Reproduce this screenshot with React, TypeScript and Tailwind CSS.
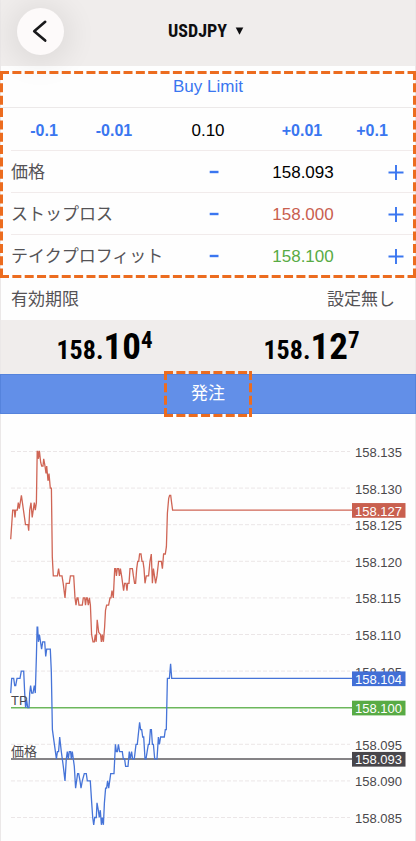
import { useState } from "react";

// [x, last three digits of the price]
const askTicks: [number, number][] = [
  [10.7, 123], [12.7, 127], [14.3, 127], [15, 126], [15.7, 127], [17.3, 127], [18.3, 128], [19.3, 127.2],
  [21.4, 129], [25.5, 125], [28, 125], [28.7, 124.2], [29.7, 127], [31, 128], [32.2, 126], [34.3, 128],
  [35.3, 127], [36.4, 128], [37.2, 135], [37.8, 135], [38.4, 134], [39.4, 135.1], [40.7, 133.5], [41.7, 133],
  [43, 133], [43.7, 134], [45, 133], [46, 132], [46.7, 133], [48, 131], [49, 132], [50.3, 130],
  [51.4, 130], [52.3, 120.6], [53.3, 118], [57.4, 118], [58.6, 119], [59.6, 118], [62, 118], [63.2, 117],
  [65, 115], [66.2, 117], [69.3, 117], [70.4, 118], [73.7, 118], [75, 115], [76, 114], [77, 115],
  [78, 115], [79, 114], [82.3, 114], [83.3, 115], [84.7, 115], [85.5, 114], [86.4, 115], [87.3, 115],
  [88.3, 114], [89.4, 115], [90.4, 114], [91.6, 110], [93, 109], [94.3, 109], [95.3, 110], [96.2, 109],
  [97.2, 112], [98.7, 110.3], [100.5, 110], [101.4, 109], [102.3, 110], [103.4, 109], [104.6, 111], [105.5, 113.3],
  [106.6, 114], [108.6, 114], [110, 115], [111, 115], [112, 116], [113.3, 115], [114.7, 119], [115.6, 119],
  [116.4, 118], [117.3, 119], [118.6, 119], [119.4, 118], [120.4, 119], [121.6, 118], [123.6, 116], [124.6, 117],
  [126, 117], [127, 116], [127.7, 117], [129, 117], [130, 119], [132.4, 119], [133.4, 118], [134.6, 117],
  [135.6, 117], [136.7, 119], [137.7, 120], [138.7, 120], [139.6, 121], [141, 121], [142, 120], [143, 120],
  [144, 119], [145, 117], [146.3, 118], [148.6, 118], [150, 120], [151.3, 121], [152.4, 117], [153.4, 119],
  [155.6, 117], [157, 118], [158.6, 120], [161.3, 120], [162.4, 119], [163.6, 121], [165.3, 121], [166.4, 122],
  [167.4, 126.6], [168.7, 128.6], [169.6, 129], [170.7, 129], [171.6, 128], [172.6, 127], [352, 127],
];

const bidTicks: [number, number][] = [
  [10.7, 102], [11.7, 104], [13.7, 104], [14.7, 103], [15.7, 103], [17, 104], [20, 104], [21.3, 105],
  [23.7, 105], [24.7, 102], [25.6, 100], [26.7, 101], [27.7, 100], [29, 100], [29.7, 102], [30.6, 103],
  [31.7, 102], [33, 102], [34.3, 103], [35.3, 102], [36.4, 107], [37.1, 111], [37.7, 111], [38.4, 109],
  [39.4, 110], [41.6, 108], [42.7, 109], [44.7, 109], [45.7, 107], [46.7, 108], [50.3, 108], [51.3, 105],
  [52.4, 97], [54.4, 95], [56.4, 93], [57.4, 94], [58.6, 94], [59.7, 96], [61.3, 94], [63.3, 92],
  [65, 90], [66.3, 93], [67.3, 94], [68.3, 93], [69.3, 94], [70.6, 94], [71.3, 93], [72.3, 94],
  [74.3, 92], [75.6, 89], [76.6, 90], [77.6, 91], [78.7, 91], [80, 90], [81, 89], [82.3, 90],
  [84.3, 91], [86.3, 91], [87.3, 90], [90.3, 90], [91.7, 87], [92.7, 85], [93.7, 84], [94.7, 85],
  [96.3, 85], [97, 87], [98.3, 86], [99.3, 85], [100.3, 86], [101.4, 84], [102.3, 85], [103.4, 84],
  [104.4, 87], [105.6, 89], [106.6, 89], [107.6, 90], [108.7, 89], [110.7, 91], [114, 91], [114.7, 93],
  [115.4, 95], [116.4, 94], [117.4, 94], [118.4, 95], [119.6, 94], [122.3, 94], [123.3, 93], [124.6, 93],
  [125.6, 92], [128, 92], [129.3, 94], [130.3, 93], [131.6, 94], [132.6, 93], [134.3, 93], [136, 95],
  [137.3, 95], [139.6, 98], [140.6, 97], [141.7, 97], [142.7, 96], [143.7, 96], [145, 93], [146, 93],
  [148.3, 95], [149.3, 95], [150.4, 97], [151.4, 97], [152.4, 95], [153.4, 95], [154.7, 93], [157, 93],
  [158.4, 96], [159.4, 95], [160.6, 96], [164.3, 96], [165.3, 97], [166.3, 97], [167.4, 104], [169.4, 104],
  [170.6, 106], [171.7, 104], [352, 104],
];

const gridTicks = [135, 130, 125, 120, 115, 110, 105, 95, 90, 85];

const markers = [
  { tick: 127, color: "#c9604f" },
  { tick: 104, color: "#426fd6" },
  { tick: 100, color: "#58ab45" },
  { tick: 93, color: "#48464b" },
];

const toY = (tick: number) => 37.5 + (135 - tick) * 7.32;
const toPoints = (ticks: [number, number][]) => ticks.map(([x, t]) => `${x},${toY(t).toFixed(1)}`).join(" ");
const toPrice = (tick: number) => `158.${String(tick).padStart(3, "0")}`;

function DashedFrame() {
  const dash = { stroke: "#ec6c1f", strokeWidth: 6, strokeDasharray: "9 3.35" };
  return (
    <svg className="h-full w-full" aria-hidden="true">
      <line x1="0" y1="0" x2="100%" y2="0" {...dash} />
      <line x1="0" y1="100%" x2="100%" y2="100%" {...dash} />
      <line x1="0" y1="0" x2="0" y2="100%" {...dash} />
      <line x1="100%" y1="0" x2="100%" y2="100%" {...dash} />
    </svg>
  );
}

function PriceRow({ id, label, initial, color }: { id: string; label: string; initial: string; color: string }) {
  const [value, setValue] = useState(initial);
  const step = (diff: number) => setValue((v) => (Number(v) + diff).toFixed(3));

  return (
    <div className="ml-[10px] flex h-[42px] items-center border-t border-[#f1ebeb] pt-[2px]">
      <label htmlFor={id} className="flex-1">{label}</label>
      <button type="button" aria-label={`${label} -`} onClick={() => step(-0.001)} className="flex h-full w-10 items-center justify-center">
        <svg width="10" height="16" viewBox="0 0 10 16">
          <path d="M.7 7h8.8" stroke="#3a76f0" strokeWidth="2.4" />
        </svg>
      </button>
      <input
        id={id}
        value={value}
        onChange={(e) => setValue(e.target.value)}
        className={`w-[138px] bg-transparent text-center outline-none ${color}`}
      />
      <button type="button" aria-label={`${label} +`} onClick={() => step(0.001)} className="flex h-full w-[43px] items-center justify-center pl-1">
        <svg width="16" height="16" viewBox="0 0 16 16">
          <path d="M.5 7.5h15M8 0v15" stroke="#3a76f0" strokeWidth="1.9" />
        </svg>
      </button>
    </div>
  );
}

function Quote({ whole, pips, point }: { whole: string; pips: string; point: string }) {
  return (
    <div className="whitespace-nowrap text-center text-[37px] leading-[54px]">
      <span className="text-[26px]">{whole}</span>
      <span>{pips}</span>
      <sup className="text-[23px]">{point}</sup>
    </div>
  );
}

function TickChart() {
  return (
    <svg viewBox="1 0 414 427" className="block w-full" fontFamily="'Liberation Sans', 'Noto Sans CJK JP', sans-serif" fontSize="13">
      {gridTicks.map((tick) => (
        <g key={tick}>
          <line x1="11" x2="350" y1={toY(tick)} y2={toY(tick)} stroke="#ebe6e7" strokeDasharray="4 2" />
          <text x="355" y={toY(tick) + 5.5} fill="#4a484b">{toPrice(tick)}</text>
        </g>
      ))}
      <line x1="11" x2="352" y1={toY(100)} y2={toY(100)} stroke="#6cb75c" strokeWidth="1.4" />
      <line x1="11" x2="352" y1={toY(93)} y2={toY(93)} stroke="#5c5a5e" strokeWidth="1.4" />
      <polyline points={toPoints(askTicks)} fill="none" stroke="#cf6555" strokeWidth="1.3" />
      <polyline points={toPoints(bidTicks)} fill="none" stroke="#4674d8" strokeWidth="1.3" />
      <text x="11" y="291" fill="#4a484b">TP</text>
      <text x="11" y="342" fill="#4a484b">価格</text>
      {markers.map(({ tick, color }) => (
        <g key={tick}>
          <rect x="352" y={toY(tick) - 7} width="53.5" height="14.7" fill={color} />
          <text x="355" y={toY(tick) + 5.5} fill="#fff">{toPrice(tick)}</text>
        </g>
      ))}
    </svg>
  );
}

export default function App() {
  const [volume, setVolume] = useState("0.10");
  const stepVolume = (diff: number) => setVolume((v) => Math.max(0, Number(v) + diff).toFixed(2));

  return (
    <div className="border-x border-[#ebe8e8] bg-[#fefefe] font-['Liberation_Sans','Noto_Sans_CJK_JP',sans-serif] text-[17px] leading-6 text-[#555356]">
      <header className="relative z-10 grid h-[66px] grid-cols-[1fr_auto_1fr] items-center bg-[#f0edec] pb-1 pl-4">
        <button
          type="button"
          aria-label="戻る"
          className="flex size-[47px] items-center justify-center rounded-full bg-[#fdfafa] shadow-[0_3px_28px_8px_rgba(0,0,0,0.07)]"
        >
          <svg width="24" height="24" viewBox="0 0 24 24" fill="none">
            <path d="M16.2 2.8 5.2 12.2l11 9.4" stroke="#19191b" strokeWidth="2.6" strokeLinecap="round" strokeLinejoin="round" />
          </svg>
        </button>
        <button
          type="button"
          className="-ml-5 flex items-center gap-2 font-['Roboto_Condensed','Liberation_Sans',sans-serif] text-lg font-bold text-[#0e0e10]"
        >
          USDJPY
          <svg width="9" height="8" viewBox="0 0 9 8">
            <path d="M.7.6h7.6L4.5 7.8z" fill="currentColor" />
          </svg>
        </button>
      </header>

      <form onSubmit={(e) => e.preventDefault()}>
        <div className="relative">
          <button type="button" className="block h-[41px] w-full text-[#3a76f0]">Buy Limit</button>

          <div className="flex h-[43px] items-center border-t border-[#ece9e9] px-2 pt-[3px] text-[#3a76f0]">
            <button type="button" onClick={() => stepVolume(-0.1)} className="w-[70px] text-base font-bold">-0.1</button>
            <button type="button" onClick={() => stepVolume(-0.01)} className="w-[70px] text-base font-bold">-0.01</button>
            <input
              aria-label="数量"
              value={volume}
              onChange={(e) => setVolume(e.target.value)}
              className="min-w-0 flex-1 bg-transparent text-center text-black outline-none"
            />
            <button type="button" onClick={() => stepVolume(0.01)} className="w-[70px] text-base font-bold">+0.01</button>
            <button type="button" onClick={() => stepVolume(0.1)} className="w-[70px] text-base font-bold">+0.1</button>
          </div>

          <PriceRow id="price" label="価格" initial="158.093" color="text-black" />
          <PriceRow id="stop-loss" label="ストップロス" initial="158.000" color="text-[#c9604f]" />
          <PriceRow id="take-profit" label="テイクプロフィット" initial="158.100" color="text-[#58ab45]" />

          <div className="pointer-events-none absolute -inset-x-px top-[5px] -bottom-[2px] z-20">
            <DashedFrame />
          </div>
        </div>

        <div className="flex h-11 items-center justify-between pt-[3px] pr-5 pl-[10px]">
          <label htmlFor="expiry">有効期限</label>
          <select id="expiry" className="appearance-none bg-transparent text-right outline-none">
            <option>設定無し</option>
          </select>
        </div>

        <div className="grid h-[54px] grid-cols-2 bg-[#f0edec] font-['Roboto_Condensed','Liberation_Sans',sans-serif] font-bold text-black">
          <Quote whole="158." pips="10" point="4" />
          <Quote whole="158." pips="12" point="7" />
        </div>

        <div className="relative -mx-px flex justify-center">
          <button type="submit" className="h-10 w-full border border-[#5583dc] bg-[#628fe8] text-white">発注</button>
          <div className="pointer-events-none absolute -inset-y-[3px] w-[88px]">
            <DashedFrame />
          </div>
        </div>
      </form>

      <TickChart />
    </div>
  );
}
